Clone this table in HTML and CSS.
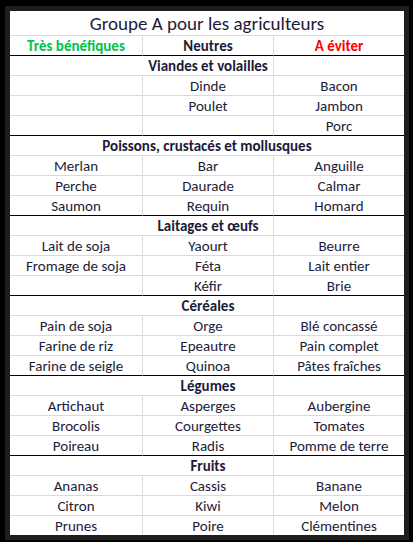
FILE: index.html
```html
<!DOCTYPE html>
<html lang="fr">
<head>
<meta charset="utf-8">
<title>Groupe A pour les agriculteurs</title>
<link rel="stylesheet" href="styles.css">
</head>
<body>
<div class="frame">
  <div class="sheet">
    <div class="title">Groupe A pour les agriculteurs</div>

    <div class="c h good">Très bénéfiques</div>
    <div class="c h">Neutres</div>
    <div class="c h bad last">A éviter</div>

    <div class="cat">Viandes et volailles</div>
    <div class="c last"></div>
    <div class="c"></div><div class="c">Dinde</div><div class="c last">Bacon</div>
    <div class="c"></div><div class="c">Poulet</div><div class="c last">Jambon</div>
    <div class="c end"></div><div class="c end"></div><div class="c end last">Porc</div>

    <div class="cat wide">Poissons, crustacés et mollusques</div>
    <div class="c">Merlan</div><div class="c">Bar</div><div class="c last">Anguille</div>
    <div class="c">Perche</div><div class="c">Daurade</div><div class="c last">Calmar</div>
    <div class="c end">Saumon</div><div class="c end">Requin</div><div class="c end last">Homard</div>

    <div class="cat">Laitages et œufs</div>
    <div class="c last"></div>
    <div class="c">Lait de soja</div><div class="c">Yaourt</div><div class="c last">Beurre</div>
    <div class="c">Fromage de soja</div><div class="c">Féta</div><div class="c last">Lait entier</div>
    <div class="c end"></div><div class="c end">Kéfir</div><div class="c end last">Brie</div>

    <div class="cat">Céréales</div>
    <div class="c last"></div>
    <div class="c">Pain de soja</div><div class="c">Orge</div><div class="c last">Blé concassé</div>
    <div class="c">Farine de riz</div><div class="c">Epeautre</div><div class="c last">Pain complet</div>
    <div class="c end">Farine de seigle</div><div class="c end">Quinoa</div><div class="c end last">Pâtes fraîches</div>

    <div class="cat">Légumes</div>
    <div class="c last"></div>
    <div class="c">Artichaut</div><div class="c">Asperges</div><div class="c last">Aubergine</div>
    <div class="c">Brocolis</div><div class="c">Courgettes</div><div class="c last">Tomates</div>
    <div class="c end">Poireau</div><div class="c end">Radis</div><div class="c end last">Pomme de terre</div>

    <div class="cat">Fruits</div>
    <div class="c last"></div>
    <div class="c">Ananas</div><div class="c">Cassis</div><div class="c last">Banane</div>
    <div class="c">Citron</div><div class="c">Kiwi</div><div class="c last">Melon</div>
    <div class="c final">Prunes</div><div class="c final">Poire</div><div class="c final last">Clémentines</div>
  </div>
</div>
</body>
</html>
```
FILE: styles.css
```css
html, body {
  margin: 0;
  padding: 0;
  background: #000;
  width: 413px;
  height: 542px;
  overflow: hidden;
}

.frame {
  margin: 6px 0 0 5px;
  width: 394px;
  border: 5px solid #1e1e1e;
}

.sheet {
  background: #fff;
  display: grid;
  grid-template-columns: 133px 131px 130px;
  font-family: Carlito, Calibri, Lato, sans-serif;
  font-size: 15px;
  color: #1c1c38;
}

.title {
  grid-column: 1 / 4;
  height: 25px;
  box-sizing: border-box;
  border-bottom: 1px solid #d8d9e3;
  text-align: center;
  font-size: 19px;
  line-height: 25px;
}

.c, .cat {
  box-sizing: border-box;
  height: 20px;
  line-height: 19px;
  padding-top: 1px;
  border-bottom: 1px solid #d8d9e3;
  border-right: 1px solid #d8d9e3;
  text-align: center;
  white-space: nowrap;
}

.c.last { border-right: none; }

.h {
  font-weight: bold;
  border-bottom-color: #000;
}

.good { color: #00c24c; }
.bad { color: #ff0000; }

.cat {
  grid-column: 1 / 3;
  font-weight: bold;
  padding-left: 133px;
}

.cat.wide {
  grid-column: 1 / 4;
  padding-left: 0;
  border-right: none;
}

.end { border-bottom-color: #000; }

.final {
  height: 19px;
  border-bottom: none;
}
```
